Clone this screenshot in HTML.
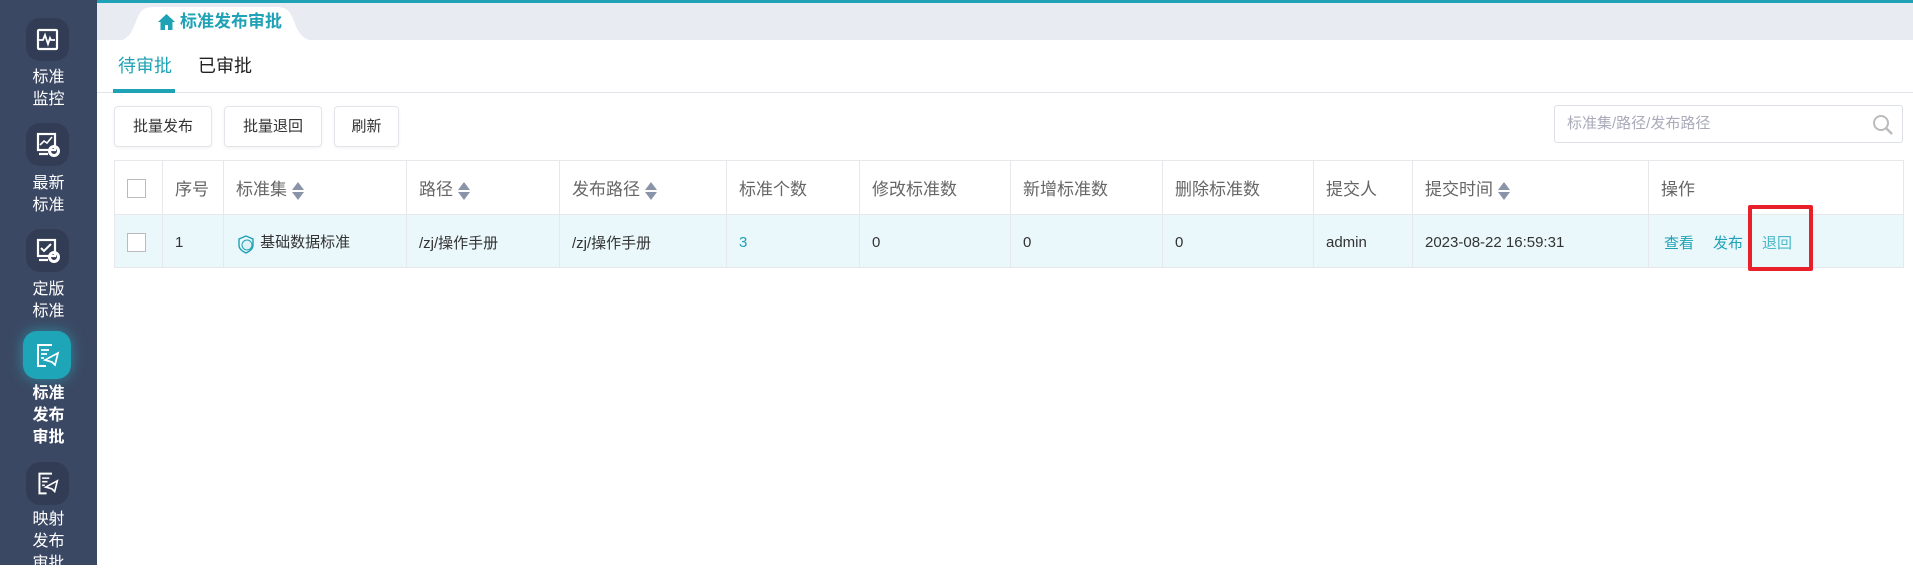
<!DOCTYPE html>
<html><head><meta charset="utf-8"><style>
*{margin:0;padding:0;box-sizing:border-box}
body{width:1913px;height:565px;overflow:hidden;background:#fff;font-family:"Liberation Sans","Noto Sans CJK SC",sans-serif;position:relative}
.abs{position:absolute}
.side{left:0;top:0;width:97px;height:565px;background:#3b4863}
.ib{position:absolute;left:26px;width:43px;height:43px;border-radius:14px;background:#323c54}
.lb{position:absolute;left:0;width:97px;text-align:center;color:#fff;font-size:16px;line-height:22px}
.top{left:97px;top:0;right:0;height:40px;background:#e8ebf2;border-top:3px solid #1fa2b5}
th,td{border:1px solid #e6e8ec;text-align:left;padding-left:12px;font-weight:normal}
table{border-collapse:collapse;position:absolute;left:114px;top:160px;width:1789px;table-layout:fixed}
th{height:54px;color:#666;font-size:17px}
td{height:53px;background:#eaf7fb;color:#333;font-size:15px;padding-top:3px}
.cb{display:inline-block;width:19px;height:19px;border:1px solid #bbb;background:#fff;vertical-align:middle}
.sort{display:inline-block;vertical-align:middle;margin-left:5px;width:12px;height:18px;position:relative}
.sort:before{content:"";position:absolute;left:0;top:0;border:6px solid transparent;border-top:0;border-bottom:8px solid #8a94a8}
.sort:after{content:"";position:absolute;left:0;top:10px;border:6px solid transparent;border-bottom:0;border-top:8px solid #8a94a8}
.btn{position:absolute;top:106px;height:41px;border:1px solid #e3e5ea;border-radius:4px;font-size:15px;color:#333;text-align:center;line-height:39px;box-shadow:0 1px 3px rgba(0,0,0,.06)}
.tl{color:#1fa2b5}
</style></head><body>
<div class="abs side">
<div class="ib" style="top:18px"><svg width="43" height="43" viewBox="0 0 43 43"><rect x="12" y="12" width="19" height="19" rx="1" fill="none" stroke="#fff" stroke-width="2.2"/><path d="M13 22h4l2-5 3 9 2-6 1 2h4" fill="none" stroke="#fff" stroke-width="1.8"/></svg></div>
<div class="lb" style="top:67px">标准<br>监控</div>
<div class="ib" style="top:123px"><svg width="43" height="43" viewBox="0 0 43 43"><rect x="12" y="11" width="17" height="16" fill="none" stroke="#fff" stroke-width="2.2"/><path d="M14 22l4-4 3 2 5-6" stroke="#fff" fill="none" stroke-width="1.6"/><path d="M13 31h9" stroke="#fff" stroke-width="2.2"/><circle cx="28" cy="28" r="4.5" fill="none" stroke="#fff" stroke-width="3"/></svg></div>
<div class="lb" style="top:173px">最新<br>标准</div>
<div class="ib" style="top:229px"><svg width="43" height="43" viewBox="0 0 43 43"><rect x="12" y="11" width="17" height="16" fill="none" stroke="#fff" stroke-width="2.2"/><path d="M15 19l3 3 7-7" stroke="#fff" fill="none" stroke-width="2"/><path d="M13 31h9" stroke="#fff" stroke-width="2.2"/><circle cx="28" cy="28" r="4.5" fill="none" stroke="#fff" stroke-width="3"/></svg></div>
<div class="lb" style="top:279px">定版<br>标准</div>
<div class="ib" style="top:331px;left:23px;width:48px;height:48px;background:#1fa5b8;box-shadow:0 0 14px rgba(40,190,210,.55)"><svg width="48" height="48" viewBox="0 0 48 48"><path d="M29 14h-14v21h8" fill="none" stroke="#fff" stroke-width="2"/><path d="M18 19h8M18 23h6M18 27h3" stroke="#fff" stroke-width="1.7"/><path d="M22 29l13-7-3 12-3-3z" fill="none" stroke="#fff" stroke-width="1.7"/></svg></div>
<div class="lb" style="top:383px;font-weight:bold">标准<br>发布<br>审批</div>
<div class="ib" style="top:462px"><svg width="43" height="43" viewBox="0 0 48 48"><path d="M29 13h-14v22h8" fill="none" stroke="#fff" stroke-width="2.2"/><path d="M18 18h8M18 22h6M18 26h3" stroke="#fff" stroke-width="1.8"/><path d="M22 28l13-7-3 12-3-3z" fill="none" stroke="#fff" stroke-width="1.8"/></svg></div>
<div class="lb" style="top:509px">映射<br>发布<br>审批</div>
</div>
<div class="abs top"></div>
<svg class="abs" style="left:115px;top:5px" width="205" height="36"><path d="M0 36C12 36 16 30 22 14 26 4 30 2 40 2H160C170 2 174 4 178 14 184 30 188 36 204 36Z" fill="#fff"/></svg>
<svg class="abs" style="left:157px;top:13px" width="19" height="18" viewBox="0 0 19 18"><path d="M9.5 1L1 9h2.5v8h4.5v-5h3v5h4.5V9H18z" fill="#1fa2b5"/></svg>
<div class="abs" style="left:180px;top:10px;font-size:17px;font-weight:bold;color:#1fa2b5;line-height:24px">标准发布审批</div>
<div class="abs" style="left:118px;top:52px;font-size:18px;color:#1fa2b5">待审批</div>
<div class="abs" style="left:198px;top:52px;font-size:18px;color:#222">已审批</div>
<div class="abs" style="left:97px;top:92px;right:0;height:1px;background:#e2e4ea"></div>
<div class="abs" style="left:113px;top:89px;width:62px;height:4px;background:#1fa2b5"></div>
<div class="btn" style="left:114px;width:98px">批量发布</div>
<div class="btn" style="left:224px;width:98px">批量退回</div>
<div class="btn" style="left:334px;width:65px">刷新</div>
<div class="abs" style="left:1554px;top:105px;width:349px;height:38px;border:1px solid #dcdfe6;border-radius:3px;font-size:15px;color:#aab;line-height:36px;padding-left:12px">标准集/路径/发布路径<svg style="position:absolute;right:8px;top:8px" width="22" height="22"><circle cx="9" cy="9" r="7" fill="none" stroke="#bbb" stroke-width="2"/><path d="M14 14l6 6" stroke="#bbb" stroke-width="2.5"/></svg></div>
<table>
<colgroup><col style="width:48px"><col style="width:61px"><col style="width:183px"><col style="width:153px"><col style="width:167px"><col style="width:133px"><col style="width:151px"><col style="width:152px"><col style="width:151px"><col style="width:99px"><col style="width:236px"><col style="width:255px"></colgroup>
<tr><th><span class="cb"></span></th><th>序号</th><th>标准集<span class="sort"></span></th><th>路径<span class="sort"></span></th><th>发布路径<span class="sort"></span></th><th>标准个数</th><th>修改标准数</th><th>新增标准数</th><th>删除标准数</th><th>提交人</th><th>提交时间<span class="sort"></span></th><th>操作</th></tr>
<tr><td><span class="cb"></span></td><td>1</td><td><svg width="20" height="20" style="vertical-align:middle" viewBox="0 0 20 20"><path d="M10 2l7 3v6c0 4-3 6-7 8-4-2-7-4-7-8V5z" fill="none" stroke="#1fa2b5" stroke-width="1.4"/><circle cx="11" cy="11" r="5" fill="#e0f2f6" stroke="#1fa2b5"/></svg> 基础数据标准</td><td>/zj/操作手册</td><td>/zj/操作手册</td><td class="tl">3</td><td>0</td><td>0</td><td>0</td><td>admin</td><td>2023-08-22 16:59:31</td><td class="tl" style="padding-left:15px"><span>查看</span><span style="margin-left:19px">发布</span><span style="margin-left:19px;color:#4bb8c8">退回</span></td></tr>
</table>
<div class="abs" style="left:1748px;top:205px;width:65px;height:66px;border:4px solid #e8202a;border-radius:2px"></div>
</body></html>
